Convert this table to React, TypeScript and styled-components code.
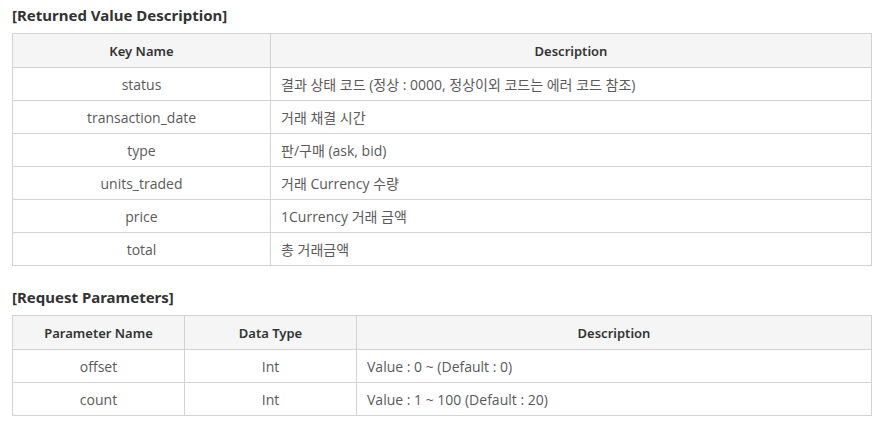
import React from 'react';
import styled, { createGlobalStyle } from 'styled-components';

const GlobalStyle = createGlobalStyle`
  body {
    margin: 0;
    background: #ffffff;
    font-family: "Open Sans", "Noto Sans CJK KR", sans-serif;
  }
`;

const Page = styled.div`
  padding: 0 6px 0 12px;
  width: 860px;
`;

const Title = styled.h3<{ $first?: boolean }>`
  margin: ${p => (p.$first ? '0' : '16px')} 0 0;
  height: 33px;
  line-height: 30px;
  font-size: 15px;
  font-weight: 700;
  color: #333333;
  font-family: "Noto Sans", "Noto Sans CJK KR", sans-serif;
`;

const Table = styled.table`
  width: 860px;
  border-collapse: collapse;
  table-layout: fixed;
  font-size: 14px;
`;

const Th = styled.th`
  height: 33px;
  padding: 0;
  background: #f5f5f5;
  border: 1px solid #d3d3d3;
  color: #333333;
  font-size: 13px;
  font-weight: 600;
  text-align: center;
  font-family: "Noto Sans", "Noto Sans CJK KR", sans-serif;
`;

const Td = styled.td<{ $left?: boolean }>`
  height: 32px;
  padding: 0 ${p => (p.$left ? '10px' : '0')};
  border: 1px solid #d3d3d3;
  color: #5a5a5a;
  text-align: ${p => (p.$left ? 'left' : 'center')};
  font-weight: 400;
`;

const returned = [
  ['status', '결과 상태 코드 (정상 : 0000, 정상이외 코드는 에러 코드 참조)'],
  ['transaction_date', '거래 채결 시간'],
  ['type', '판/구매 (ask, bid)'],
  ['units_traded', '거래 Currency 수량'],
  ['price', '1Currency 거래 금액'],
  ['total', '총 거래금액'],
];

const params = [
  ['offset', 'Int', 'Value : 0 ~ (Default : 0)'],
  ['count', 'Int', 'Value : 1 ~ 100 (Default : 20)'],
];

export default function App() {
  return (
    <>
      <GlobalStyle />
      <Page>
        <Title $first>[Returned Value Description]</Title>
        <Table>
          <colgroup>
            <col style={{ width: 258 }} />
            <col />
          </colgroup>
          <thead>
            <tr>
              <Th>Key Name</Th>
              <Th>Description</Th>
            </tr>
          </thead>
          <tbody>
            {returned.map(([k, d]) => (
              <tr key={k}>
                <Td>{k}</Td>
                <Td $left>{d}</Td>
              </tr>
            ))}
          </tbody>
        </Table>

        <Title>[Request Parameters]</Title>
        <Table>
          <colgroup>
            <col style={{ width: 172 }} />
            <col style={{ width: 172 }} />
            <col />
          </colgroup>
          <thead>
            <tr>
              <Th>Parameter Name</Th>
              <Th>Data Type</Th>
              <Th>Description</Th>
            </tr>
          </thead>
          <tbody>
            {params.map(([n, t, d]) => (
              <tr key={n}>
                <Td>{n}</Td>
                <Td>{t}</Td>
                <Td $left>{d}</Td>
              </tr>
            ))}
          </tbody>
        </Table>
      </Page>
    </>
  );
}
